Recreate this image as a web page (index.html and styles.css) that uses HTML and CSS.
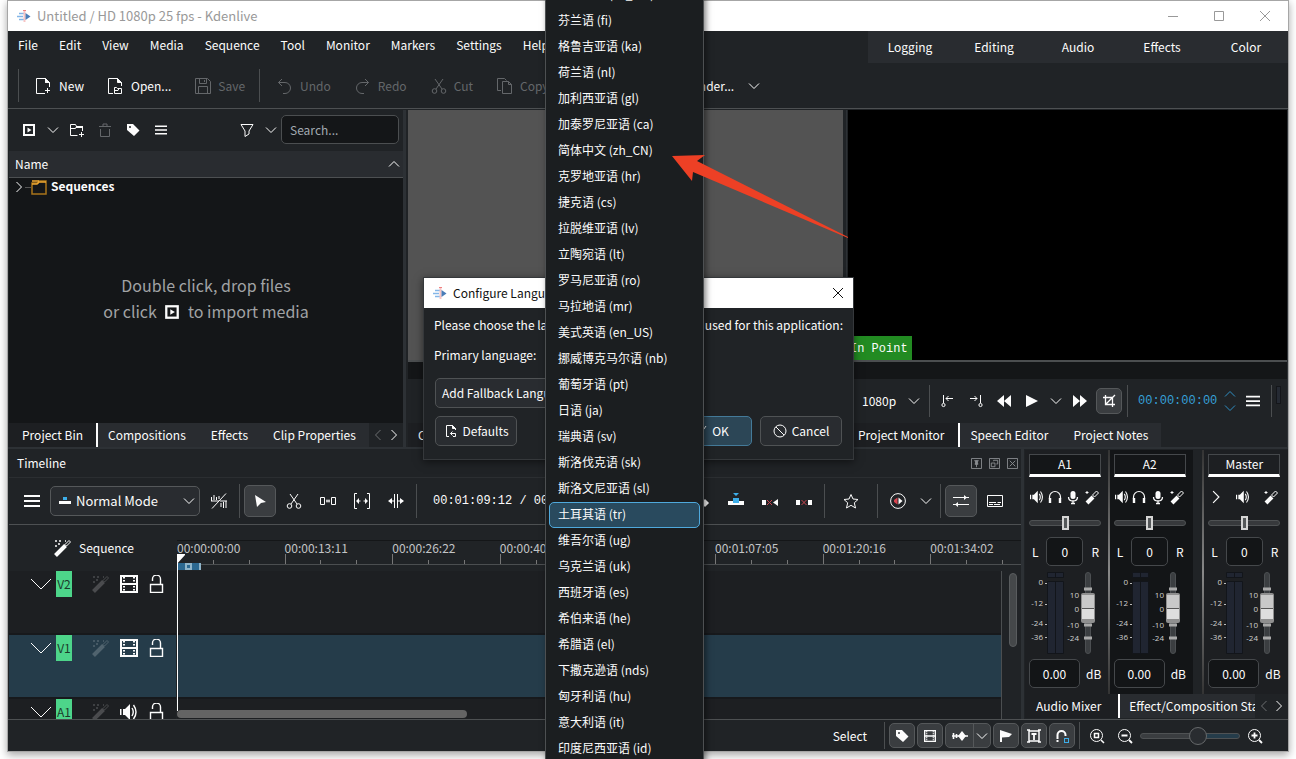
FILE: index.html
```html
<!DOCTYPE html>
<html lang="en">
<head>
<meta charset="utf-8">
<title>Untitled / HD 1080p 25 fps - Kdenlive</title>
<link rel="stylesheet" href="styles.css">
</head>
<body>
<svg class="sprite" aria-hidden="true">
  <symbol id="logo" viewBox="0 0 14 14"><path d="M2 4.500h5M0 7.500h6M2 10.500h5" stroke="#84b6e8" stroke-width="1.600"/><path d="M7.500 1v12" stroke="#f7c4c4" stroke-width="2"/><path d="M6 1.500h3" stroke="#f08080"/><path d="M8.500 4l5 3.500-5 3.500z" fill="#4a7db8"/></symbol>
  <symbol id="chev" viewBox="0 0 12 12"><path d="M1 3.500l5 5 5-5"/></symbol>
  <symbol id="chev-up" viewBox="0 0 12 12"><path d="M1 8.500l5-5 5 5"/></symbol>
  <symbol id="chev-r" viewBox="0 0 12 12"><path d="M3.500 1l5 5-5 5"/></symbol>
  <symbol id="chev-l" viewBox="0 0 12 12"><path d="M8.500 1l-5 5 5 5"/></symbol>
  <symbol id="wide" viewBox="0 0 22 12"><path d="M1 1l10 10 10-10"/></symbol>
  <symbol id="menu" viewBox="0 0 16 16"><path d="M0 3h16M0 8h16M0 13h16" stroke-width="2"/></symbol>
  <symbol id="new" viewBox="0 0 16 16"><path d="M9 15.500H.5V.5h9l4 4V9M9.500 .5v4h4M11.500 10v5M9 12.500h5"/><path d="M9.500 .5v4h4z" fill="currentColor"/></symbol>
  <symbol id="open" viewBox="0 0 16 16"><path d="M5 15.500H.5V.5h9l4 4V8M6.500 15.500v-6h2l1 1h4v5zM7 12.500h3l1-2"/><path d="M9.500 .5v4h4z" fill="currentColor"/></symbol>
  <symbol id="save" viewBox="0 0 16 16"><path d="M.5 .5h12l3 3v12H.5zM4.500 .5v5h7v-5M3.500 15.500v-7h9v7M9.500 2v2"/></symbol>
  <symbol id="undo" viewBox="0 0 16 16"><path d="M5 1L1.500 4.500 5 8M1.500 4.500H8a5.500 5.500 0 010 11H6"/></symbol>
  <symbol id="redo" viewBox="0 0 16 16"><path d="M10 1l3.500 3.500L10 8M13.500 4.500H7a5.500 5.500 0 000 11h2"/></symbol>
  <symbol id="cut" viewBox="0 0 16 16"><path d="M4 1l7 10M12 1L5 11"/><circle cx="3.500" cy="13" r="2.300"/><circle cx="12.500" cy="13" r="2.300"/></symbol>
  <symbol id="copy" viewBox="0 0 16 16"><path d="M4 12.500H.5V.5h7l2 2M5.500 3.500h6l3 3v9h-9zM11.500 3.500v3h3"/></symbol>
  <symbol id="clip" viewBox="0 0 14 14"><rect x="2" y="2" width="10" height="10" stroke-width="2"/><path d="M5.500 4.500v5l4-2.500z" fill="currentColor" stroke="none"/></symbol>
  <symbol id="addfolder" viewBox="0 0 16 16"><path d="M8.500 13.500h-7v-11h5l1 2h6V9M1.500 6.500h5l1-2M12.500 10v5M10 12.500h5"/><path d="M7 4h7v2H7z" fill="currentColor" stroke="none"/></symbol>
  <symbol id="trash" viewBox="0 0 16 16"><path d="M2 4.500h12M6 4V2h4v2M3.500 7v7.500h9V7"/></symbol>
  <symbol id="tag" viewBox="0 0 16 16"><path d="M2 2h6l6.500 6.500-5.500 5.500L2 8zM5 4a1 1 0 100 2 1 1 0 000-2z" fill="currentColor" fill-rule="evenodd" stroke="none"/></symbol>
  <symbol id="filter" viewBox="0 0 16 16"><path d="M2 2.500h12L10 9v3l-4 2.500V9z"/></symbol>
  <symbol id="folder" viewBox="0 0 16 16"><path d="M1 4h6l1-2h7v13H1z" stroke="#a8741a" stroke-width="1.500"/><path d="M1 2h7M15 3H8L6 5H1" stroke="#f0a830" stroke-width="1.500"/></symbol>
  <symbol id="wand" viewBox="0 0 18 18"><path d="M1.500 16.500l10-10" stroke-width="4"/><path d="M11 5.500l4-4 1.500 1.500-4 4z"/><path d="M1 2h2M5 2h2M11 2h1M4 5h2M1 7h2" stroke-width="1.600"/></symbol>
  <symbol id="film" viewBox="0 0 18 18"><path d="M1 1h16v16H1zM1 9h16" stroke-width="2"/><path d="M4 2v14M14 2v14" stroke-dasharray="1.500 1.500" stroke-width="2"/></symbol>
  <symbol id="lock" viewBox="0 0 16 18"><path d="M1.500 9.500h12v8h-12zM3.500 6V4a3.500 3.500 0 018 0v5" stroke-width="1.400"/></symbol>
  <symbol id="vol" viewBox="0 0 18 18"><path d="M0 6h1.500v6H0zM3 6h2l5-5v16l-5-5H3z" fill="currentColor" stroke="none"/><path d="M12 5q2.500 4 0 8M13.500 2q5 7 0 14" stroke-width="1.400"/></symbol>
  <symbol id="head" viewBox="0 0 16 16"><path d="M2.500 10V8a5.500 5.500 0 0111 0v2" stroke-width="1.200"/><path d="M3 9v5M13 9v5" stroke-width="2.400"/></symbol>
  <symbol id="mic" viewBox="0 0 16 16"><rect x="5.500" y="2" width="5" height="8" rx="2.500" fill="currentColor" stroke="none"/><path d="M3.500 8q0 4 4.500 4t4.500-4M8 12v3M6 14.500h4" stroke-width="1.300"/></symbol>
  <symbol id="fx" viewBox="0 0 16 16"><path d="M3 14l6-6" stroke-width="4"/><path d="M8.500 6l4-4 2 2-4 4zM3 2v3M1.500 3.500h3"/></symbol>
  <symbol id="nowave" viewBox="0 0 16 16"><path d="M.5 4v4M3 2v5M5.500 4v3M8 3v3M10 10v4M12.500 9v6M15 8v7M1 15.500L15 .5M0 8h8M9 8h7"/></symbol>
  <symbol id="pointer" viewBox="0 0 16 16"><path d="M3 2l11 7-5 1-4 4z" fill="currentColor" stroke="none"/></symbol>
  <symbol id="spacer" viewBox="0 0 16 16"><path d="M.5 4.500h4v7h-4zM11.500 4.500h4v7h-4zM6 8h4M7 6.500v3M9 6.500v3"/></symbol>
  <symbol id="slip" viewBox="0 0 16 16"><path d="M3 .5H.5v15H3M13 .5h2.500v15H13M3 8h3.500M9.500 8H13"/><path d="M5 5v6L2 8zM11 5v6l3-3z" fill="currentColor" stroke="none"/></symbol>
  <symbol id="ripple" viewBox="0 0 16 16"><path d="M6.500 1v14M9.500 1v14M2 8h4M10 8h4"/><path d="M4 5v6L0 8zM12 5v6l4-3z" fill="currentColor" stroke="none"/></symbol>
  <symbol id="mix" viewBox="0 0 16 16"><path d="M0 8h5v4H0z" fill="currentColor" stroke="none"/><path d="M7 10l4-4 4 4-4 4z" fill="currentColor" stroke="none"/></symbol>
  <symbol id="insert" viewBox="0 0 16 16"><path d="M0 8h16v4H0z" fill="currentColor" stroke="none"/><path d="M5 5h6v5H5zM5 0h6L8 3z" fill="#3daee9" stroke="none"/></symbol>
  <symbol id="extract" viewBox="0 0 16 16"><path d="M0 7h4v5H0zM16 6v7l-5-3.500z" fill="currentColor" stroke="none"/><path d="M5 7l5 5M10 7l-5 5" stroke="#c8454f"/></symbol>
  <symbol id="lift" viewBox="0 0 16 16"><path d="M0 7h4v5H0zM12 7h4v5h-4z" fill="currentColor" stroke="none"/><path d="M5.500 7l5 5M10.500 7l-5 5" stroke="#c8454f"/></symbol>
  <symbol id="star" viewBox="0 0 16 16"><path d="M8 1.500l2 4.500 5 .5-3.700 3.300L12.500 15 8 12.300 3.500 15l1.200-5.200L1 6.500 6 6z"/></symbol>
  <symbol id="preview" viewBox="0 0 16 16"><circle cx="8" cy="8" r="7.400"/><path d="M7.500 4.500v7L4 9V7z" fill="#d9444f" stroke="none"/><path d="M8.500 4.500v7L12.500 8z" fill="currentColor" stroke="none"/></symbol>
  <symbol id="sliders" viewBox="0 0 16 16"><path d="M0 4.500h16M0 11.500h16"/><path d="M11 2v5l3-2.500zM5 9v5l-3-2.500z" fill="currentColor" stroke="none"/></symbol>
  <symbol id="subtitle" viewBox="0 0 16 16"><path d="M.5 2.500h15v11H.5zM2 9.500h7M10.500 9.500H14M2 11.500h4M7 11.500h6"/></symbol>
  <symbol id="setin" viewBox="0 0 16 16"><path d="M3.500 2v8M6 5.500h7M8.500 3L6 5.500 8.500 8"/><circle cx="3.500" cy="12" r="1.600"/></symbol>
  <symbol id="setout" viewBox="0 0 16 16"><path d="M12.500 2v8M2 5.500h7M6.500 3L9 5.500 6.500 8"/><circle cx="12.500" cy="12" r="1.600"/></symbol>
  <symbol id="rew" viewBox="0 0 16 16"><path d="M8 2v12L1 8zM15 2v12L8 8z" fill="currentColor" stroke="none"/></symbol>
  <symbol id="fwd" viewBox="0 0 16 16"><path d="M8 2v12l7-6zM1 2v12l7-6z" fill="currentColor" stroke="none"/></symbol>
  <symbol id="play" viewBox="0 0 16 16"><path d="M2 2v12l12-6z" fill="currentColor" stroke="none"/></symbol>
  <symbol id="crop" viewBox="0 0 16 16"><path d="M4.500 2v9.500H14M2 4.500h9.500V14M5 11l9-9" stroke-width="1.300"/></symbol>
  <symbol id="wave" viewBox="0 0 16 16"><path d="M1.500 5v6M0 8h16M4.500 6v4" stroke-width="1.600"/><path d="M6 8l4-5 4 5-4 5z" fill="currentColor" stroke="none"/></symbol>
  <symbol id="flag" viewBox="0 0 16 16"><path d="M2 2l12 4-3 3-7 .5V14H2z" fill="currentColor" stroke="none"/></symbol>
  <symbol id="textbox" viewBox="0 0 16 16"><path d="M3 3h10v10H3zM1 2h3M12 2h3M1 14h3M12 14h3" stroke-width="1.500"/><path d="M5.500 6h5M8 6v6" stroke-width="1.800"/></symbol>
  <symbol id="magnet" viewBox="0 0 16 16"><path d="M3.500 11V7a4 4 0 018 0v1" stroke-width="2"/><path d="M3.500 12v2" stroke-width="2"/><rect x="10.500" y="10.500" width="4" height="4" stroke="#3daee9"/></symbol>
  <symbol id="zfit" viewBox="0 0 16 16"><circle cx="7.500" cy="7.500" r="6"/><path d="M5.500 5.500h4v4h-4zM12 12l3 3" stroke-width="1.500"/></symbol>
  <symbol id="zout" viewBox="0 0 16 16"><circle cx="7.500" cy="7.500" r="6"/><path d="M4.500 7.500h6M12 12l3 3" stroke-width="1.800"/></symbol>
  <symbol id="zin" viewBox="0 0 16 16"><circle cx="7.500" cy="7.500" r="6"/><path d="M4.500 7.500h6M7.500 4.500v6M12 12l3 3" stroke-width="1.800"/></symbol>
  <symbol id="x" viewBox="0 0 12 12"><path d="M1 1l10 10M11 1L1 11"/></symbol>
  <symbol id="min" viewBox="0 0 12 12"><path d="M1 6.500h10"/></symbol>
  <symbol id="max" viewBox="0 0 12 12"><path d="M1.500 1.500h9v9h-9z"/></symbol>
  <symbol id="pin" viewBox="0 0 12 12"><path d="M.5 .5h11v11H.5zM3.500 3h5M6 7v3M4 6.500h4"/><path d="M5 3h2v4H5z" fill="currentColor"/></symbol>
  <symbol id="float" viewBox="0 0 12 12"><path d="M.5 .5h11v11H.5zM2.500 5.500h4v4h-4zM5 3.500V2.500h4.500v4H8"/></symbol>
  <symbol id="boxx" viewBox="0 0 12 12"><path d="M.5 .5h11v11H.5zM3 3l6 6M9 3L3 9"/></symbol>
  <symbol id="deny" viewBox="0 0 14 14"><circle cx="7" cy="7" r="6"/><path d="M3 3l8 8"/></symbol>
  <symbol id="reset" viewBox="0 0 14 14"><path d="M5 12.500H2.500v-11h6l3 3V6M11.500 12.500V9.500h-5M8.500 7.500l-2 2 2 2M9 12.500h2.500"/><path d="M8.500 1.500v3h3z" fill="currentColor"/></symbol>
  <symbol id="check" viewBox="0 0 14 14"><path d="M2 8l4 4 7-10"/></symbol>
  <symbol id="mode" viewBox="0 0 12 12"><path d="M0 6h12v3H0z" fill="currentColor" stroke="none"/><path d="M4 2h4v3H4z" fill="#3daee9" stroke="none"/></symbol>
  <symbol id="meter" viewBox="0 0 74 82">
    <g fill="#202531" stroke="#12151a"><path d="M19.500 .5h8v5h-8zM27.500 .5h8v5h-8zM19.500 9.500h8v72h-8zM27.500 9.500h8v72h-8z"/></g>
    <path d="M17 11.500h2M17 32.500h2M17 52.500h2M17 65.500h2" stroke="#bbb"/>
    <rect x="57.500" y=".5" width="5" height="81" rx="2.500" fill="#3b3e41" stroke="#4c4f52"/>
    <path d="M56 17h8M56 53h8M56 66h8" stroke="#a9a9a9" stroke-width="3"/>
    <rect x="53" y="21" width="14" height="30" rx="2" fill="#8f8f8f" stroke="none"/><path d="M54 23h12v13H54z" fill="#c8c8c8" stroke="none"/><path d="M54 37h12v10H54z" fill="#dedede" stroke="none"/><path d="M54 36.500h12" stroke="#555"/>
  </symbol>
</svg>

<main class="window">
  <header class="titlebar">
    <svg class="logo"><use href="#logo"/></svg>
    <h1>Untitled / HD 1080p 25 fps - Kdenlive</h1>
    <div class="winctl">
      <button aria-label="Minimize"><svg class="i12"><use href="#min"/></svg></button>
      <button aria-label="Maximize"><svg class="i12"><use href="#max"/></svg></button>
      <button aria-label="Close"><svg class="i12"><use href="#x"/></svg></button>
    </div>
  </header>

  <div class="menurow">
    <nav class="menubar">
      <button>File</button><button>Edit</button><button>View</button><button>Media</button><button>Sequence</button><button>Tool</button><button>Monitor</button><button>Markers</button><button>Settings</button><button>Help</button>
    </nav>
    <nav class="workspaces">
      <button>Logging</button><button>Editing</button><button>Audio</button><button>Effects</button><button>Color</button>
    </nav>
  </div>

  <div class="toolbar">
    <span class="sep"></span>
    <button><svg class="i16"><use href="#new"/></svg>New</button>
    <button><svg class="i16"><use href="#open"/></svg>Open...</button>
    <button disabled><svg class="i16"><use href="#save"/></svg>Save</button>
    <span class="sep"></span>
    <button disabled><svg class="i16"><use href="#undo"/></svg>Undo</button>
    <button disabled><svg class="i16"><use href="#redo"/></svg>Redo</button>
    <button disabled><svg class="i16"><use href="#cut"/></svg>Cut</button>
    <button disabled><svg class="i16"><use href="#copy"/></svg>Copy</button>
    <button disabled><svg class="i16"><use href="#copy"/></svg>Paste</button>
    <button class="render">Render...<svg class="i12"><use href="#chev"/></svg></button>
  </div>

  <div class="docks">
    <section class="bin">
      <div class="bintools">
        <button class="w28" aria-label="Add clip"><svg class="i14"><use href="#clip"/></svg></button>
        <button class="w20" aria-label="Add clip menu"><svg class="i12"><use href="#chev"/></svg></button>
        <button class="w28" aria-label="Create folder"><svg class="i16"><use href="#addfolder"/></svg></button>
        <button class="w28" disabled aria-label="Delete"><svg class="i16"><use href="#trash"/></svg></button>
        <button class="w28" aria-label="Tags"><svg class="i16"><use href="#tag"/></svg></button>
        <button class="w28" aria-label="Options"><svg class="i12"><use href="#menu"/></svg></button>
        <button class="w24 right" aria-label="Filter"><svg class="i16"><use href="#filter"/></svg></button>
        <button class="w24" aria-label="Filter menu"><svg class="i12"><use href="#chev"/></svg></button>
        <input type="text" class="search" placeholder="Search..." aria-label="Search">
      </div>
      <div class="binhead"><span>Name</span><svg class="i12"><use href="#chev-up"/></svg></div>
      <div class="tree">
        <div class="treerow"><svg class="i12"><use href="#chev-r"/></svg><span class="branch"></span><svg class="i16"><use href="#folder"/></svg><b>Sequences</b></div>
        <p class="hint">Double click, drop files<br>or click <svg class="i16"><use href="#clip"/></svg> to import media</p>
      </div>
      <nav class="tabs">
        <button class="on">Project Bin</button><button>Compositions</button><button>Effects</button><button>Clip Properties</button>
        <span class="tabnav"><svg class="i12 dim"><use href="#chev-l"/></svg><svg class="i12"><use href="#chev-r"/></svg></span>
      </nav>
    </section>

    <section class="monitor">
      <div class="screen grey"></div>
      <div class="mruler"></div>
      <div class="mtools"></div>
      <nav class="tabs"><button class="on">Clip Monitor</button><button>Library</button></nav>
    </section>

    <section class="monitor">
      <div class="screen black"><span class="inpoint">In Point</span></div>
      <div class="mruler"></div>
      <div class="mtools">
        <button class="res">1080p<svg class="i12"><use href="#chev"/></svg></button>
        <span class="sep"></span>
        <button class="w28" aria-label="Set zone in"><svg class="i16"><use href="#setin"/></svg></button>
        <button class="w28" aria-label="Set zone out"><svg class="i16"><use href="#setout"/></svg></button>
        <button class="w28" aria-label="Rewind"><svg class="i16"><use href="#rew"/></svg></button>
        <button class="w28" aria-label="Play"><svg class="i16"><use href="#play"/></svg></button>
        <button class="w20" aria-label="Play menu"><svg class="i12"><use href="#chev"/></svg></button>
        <button class="w28" aria-label="Forward"><svg class="i16"><use href="#fwd"/></svg></button>
        <button class="w26 active" aria-label="Edit mode"><svg class="i16"><use href="#crop"/></svg></button>
        <span class="sep"></span>
        <span class="tc">00:00:00:00</span>
        <span class="spin"><svg class="i12"><use href="#chev-up"/></svg><svg class="i12"><use href="#chev"/></svg></span>
        <button class="w20" aria-label="Monitor options"><svg class="i14"><use href="#menu"/></svg></button>
        <span class="sep"></span>
        <span class="mini"></span>
      </div>
      <nav class="tabs"><button class="on">Project Monitor</button><button>Speech Editor</button><button>Project Notes</button></nav>
    </section>
  </div>

  <div class="lower">
    <section class="timeline">
      <div class="docktitle"><h2>Timeline</h2><svg class="i11"><use href="#pin"/></svg><svg class="i11"><use href="#float"/></svg><svg class="i11"><use href="#boxx"/></svg></div>
      <div class="ttools">
        <button class="w28" aria-label="Timeline menu"><svg class="i16"><use href="#menu"/></svg></button>
        <label class="mode"><svg class="i12"><use href="#mode"/></svg><select aria-label="Edit mode"><option>Normal Mode</option></select><svg class="i12"><use href="#chev"/></svg></label>
        <button class="w32" aria-label="Waveforms"><svg class="i16"><use href="#nowave"/></svg></button>
        <span class="sep"></span>
        <button class="w32 active" aria-label="Selection tool"><svg class="i16"><use href="#pointer"/></svg></button>
        <button class="w32" aria-label="Razor tool"><svg class="i16"><use href="#cut"/></svg></button>
        <button class="w32" aria-label="Spacer tool"><svg class="i16"><use href="#spacer"/></svg></button>
        <button class="w32" aria-label="Slip tool"><svg class="i16"><use href="#slip"/></svg></button>
        <button class="w32" aria-label="Ripple tool"><svg class="i16"><use href="#ripple"/></svg></button>
        <span class="sep"></span>
        <span class="pos">00:01:09:12 / 00:00:00:00</span>
        <button class="w32 right" aria-label="Mix clips"><svg class="i16"><use href="#mix"/></svg></button>
        <button class="w32" aria-label="Insert zone"><svg class="i16"><use href="#insert"/></svg></button>
        <button class="w32" aria-label="Extract zone"><svg class="i16"><use href="#extract"/></svg></button>
        <button class="w32" aria-label="Lift zone"><svg class="i16"><use href="#lift"/></svg></button>
        <span class="sep"></span>
        <button class="w32 wide" aria-label="Favorite effects"><svg class="i16"><use href="#star"/></svg></button>
        <span class="sep"></span>
        <button class="w32" aria-label="Render preview"><svg class="i16"><use href="#preview"/></svg></button>
        <button class="w20" aria-label="Preview menu"><svg class="i12"><use href="#chev"/></svg></button>
        <span class="sep"></span>
        <button class="w32 active" aria-label="Show mixer"><svg class="i16"><use href="#sliders"/></svg></button>
        <button class="w32" aria-label="Subtitles"><svg class="i16"><use href="#subtitle"/></svg></button>
      </div>
      <div class="rulerrow">
        <div class="seqhead"><svg class="i18"><use href="#wand"/></svg>Sequence</div>
        <div class="ruler">
          <div class="cell">00:00:00:00<span class="ticks"><i></i><i></i><i></i></span></div>
          <div class="cell">00:00:13:11<span class="ticks"><i></i><i></i><i></i></span></div>
          <div class="cell">00:00:26:22<span class="ticks"><i></i><i></i><i></i></span></div>
          <div class="cell">00:00:40:08<span class="ticks"><i></i><i></i><i></i></span></div>
          <div class="cell">00:00:53:19<span class="ticks"><i></i><i></i><i></i></span></div>
          <div class="cell">00:01:07:05<span class="ticks"><i></i><i></i><i></i></span></div>
          <div class="cell">00:01:20:16<span class="ticks"><i></i><i></i><i></i></span></div>
          <div class="cell">00:01:34:02<span class="ticks"><i></i><i></i><i></i></span></div>
          <span class="zone"></span>
        </div>
      </div>
      <div class="tracks">
        <div class="heads">
          <div class="head"><svg class="fold"><use href="#wide"/></svg><span class="tname">V2</span><svg class="i18 faint"><use href="#wand"/></svg><svg class="i18"><use href="#film"/></svg><svg class="i18"><use href="#lock"/></svg></div>
          <div class="head sel"><svg class="fold"><use href="#wide"/></svg><span class="tname">V1</span><svg class="i18 faint"><use href="#wand"/></svg><svg class="i18"><use href="#film"/></svg><svg class="i18"><use href="#lock"/></svg></div>
          <div class="head"><svg class="fold"><use href="#wide"/></svg><span class="tname">A1</span><svg class="i18 faint"><use href="#wand"/></svg><svg class="i18"><use href="#vol"/></svg><svg class="i18"><use href="#lock"/></svg></div>
        </div>
        <div class="lanes"><div class="lane"></div><div class="lane sel"></div><div class="lane"></div><span class="hbar"></span></div>
        <div class="vscroll"><span></span></div>
        <svg class="playhead" viewBox="0 0 8 160" preserveAspectRatio="none"><path d="M0 0h8v1L1 9v151H0z" fill="#fff" stroke="none"/></svg>
      </div>
    </section>

    <section class="mixer">
      <div class="strips">
        <div class="strip">
          <h3>A1</h3>
          <div class="sicons"><svg class="i14"><use href="#vol"/></svg><svg class="i16"><use href="#head"/></svg><svg class="i16"><use href="#mic"/></svg><svg class="i16"><use href="#fx"/></svg></div>
          <input type="range" class="pan" aria-label="A1 balance">
          <div class="lr"><span>L</span><input type="text" value="0" aria-label="A1 balance value"><span>R</span></div>
          <svg class="meter" viewBox="0 0 74 82"><use href="#meter"/><g class="scale"><text x="15" y="13">0</text><text x="15" y="34">-12</text><text x="15" y="54">-24</text><text x="15" y="68">-36</text><text x="51" y="26">10</text><text x="51" y="40">0</text><text x="51" y="56">-10</text><text x="51" y="69">-24</text></g></svg>
          <div class="db"><input type="text" value="0.00" aria-label="A1 volume"><span>dB</span></div>
        </div>
        <div class="strip alt">
          <h3>A2</h3>
          <div class="sicons"><svg class="i14"><use href="#vol"/></svg><svg class="i16"><use href="#head"/></svg><svg class="i16"><use href="#mic"/></svg><svg class="i16"><use href="#fx"/></svg></div>
          <input type="range" class="pan" aria-label="A2 balance">
          <div class="lr"><span>L</span><input type="text" value="0" aria-label="A2 balance value"><span>R</span></div>
          <svg class="meter" viewBox="0 0 74 82"><use href="#meter"/><g class="scale"><text x="15" y="13">0</text><text x="15" y="34">-12</text><text x="15" y="54">-24</text><text x="15" y="68">-36</text><text x="51" y="26">10</text><text x="51" y="40">0</text><text x="51" y="56">-10</text><text x="51" y="69">-24</text></g></svg>
          <div class="db"><input type="text" value="0.00" aria-label="A2 volume"><span>dB</span></div>
        </div>
        <div class="strip master">
          <h3>Master</h3>
          <div class="sicons"><svg class="i14"><use href="#chev-r"/></svg><svg class="i14"><use href="#vol"/></svg><svg class="i16"><use href="#fx"/></svg></div>
          <input type="range" class="pan" aria-label="Master balance">
          <div class="lr"><span>L</span><input type="text" value="0" aria-label="Master balance value"><span>R</span></div>
          <svg class="meter" viewBox="0 0 74 82"><use href="#meter"/><g class="scale"><text x="15" y="13">0</text><text x="15" y="34">-12</text><text x="15" y="54">-24</text><text x="15" y="68">-36</text><text x="51" y="26">10</text><text x="51" y="40">0</text><text x="51" y="56">-10</text><text x="51" y="69">-24</text></g></svg>
          <div class="db"><input type="text" value="0.00" aria-label="Master volume"><span>dB</span></div>
        </div>
      </div>
      <nav class="tabs"><button class="on">Audio Mixer</button><button class="clip">Effect/Composition Stack</button>
        <span class="tabnav"><svg class="i12 dim"><use href="#chev-l"/></svg><svg class="i12"><use href="#chev-r"/></svg></span></nav>
    </section>
  </div>

  <footer class="status">
    <span class="msg">Select</span>
    <span class="sep"></span>
    <button class="sb" aria-label="Color tags"><svg class="i16"><use href="#tag"/></svg></button>
    <button class="sb" aria-label="Video thumbnails"><svg class="i12"><use href="#film"/></svg></button>
    <div class="split"><button aria-label="Audio thumbnails"><svg class="i16"><use href="#wave"/></svg></button><button aria-label="Audio thumbnails menu"><svg class="i12"><use href="#chev"/></svg></button></div>
    <button class="sb" aria-label="Markers"><svg class="i16"><use href="#flag"/></svg></button>
    <button class="sb" aria-label="Marker comments"><svg class="i16"><use href="#textbox"/></svg></button>
    <button class="sb" aria-label="Snap"><svg class="i16"><use href="#magnet"/></svg></button>
    <span class="sep"></span>
    <button class="w26" aria-label="Fit zoom"><svg class="i16"><use href="#zfit"/></svg></button>
    <button class="w26" aria-label="Zoom out"><svg class="i16"><use href="#zout"/></svg></button>
    <input type="range" class="zoom" value="60" aria-label="Zoom">
    <button class="w26" aria-label="Zoom in"><svg class="i16"><use href="#zin"/></svg></button>
  </footer>
</main>

<div class="dialog" role="dialog" aria-labelledby="dlg-title">
  <header><svg class="logo"><use href="#logo"/></svg><h2 id="dlg-title">Configure Language</h2><button aria-label="Close dialog"><svg class="i12"><use href="#x"/></svg></button></header>
  <div class="dbody">
    <p class="intro"><span>Please choose the language which</span> <span>should be used for this application:</span></p>
    <p>Primary language:</p>
    <button class="btn fallback">Add Fallback Language</button>
    <div class="dbtns">
      <button class="btn"><svg class="i14"><use href="#reset"/></svg>Defaults</button>
      <button class="btn ok"><svg class="i14"><use href="#check"/></svg>OK</button>
      <button class="btn"><svg class="i14"><use href="#deny"/></svg>Cancel</button>
    </div>
  </div>
</div>

<ul class="popup" role="listbox" aria-label="Primary language" lang="zh-CN">
  <li role="option">繁体中文 (zh_TW)</li>
  <li role="option">芬兰语 (fi)</li>
  <li role="option">格鲁吉亚语 (ka)</li>
  <li role="option">荷兰语 (nl)</li>
  <li role="option">加利西亚语 (gl)</li>
  <li role="option">加泰罗尼亚语 (ca)</li>
  <li role="option">简体中文 (zh_CN)</li>
  <li role="option">克罗地亚语 (hr)</li>
  <li role="option">捷克语 (cs)</li>
  <li role="option">拉脱维亚语 (lv)</li>
  <li role="option">立陶宛语 (lt)</li>
  <li role="option">罗马尼亚语 (ro)</li>
  <li role="option">马拉地语 (mr)</li>
  <li role="option">美式英语 (en_US)</li>
  <li role="option">挪威博克马尔语 (nb)</li>
  <li role="option">葡萄牙语 (pt)</li>
  <li role="option">日语 (ja)</li>
  <li role="option">瑞典语 (sv)</li>
  <li role="option">斯洛伐克语 (sk)</li>
  <li role="option">斯洛文尼亚语 (sl)</li>
  <li role="option" aria-selected="true">土耳其语 (tr)</li>
  <li role="option">维吾尔语 (ug)</li>
  <li role="option">乌克兰语 (uk)</li>
  <li role="option">西班牙语 (es)</li>
  <li role="option">希伯来语 (he)</li>
  <li role="option">希腊语 (el)</li>
  <li role="option">下撒克逊语 (nds)</li>
  <li role="option">匈牙利语 (hu)</li>
  <li role="option">意大利语 (it)</li>
  <li role="option">印度尼西亚语 (id)</li>
</ul>

<svg class="arrow" viewBox="0 0 178 86" aria-hidden="true"><path d="M1 2l33-1-8 6 151 76v1L22 18l-1 9z" fill="#ed4025" stroke="none"/></svg>
</body>
</html>
```
FILE: styles.css
```css
* { box-sizing: border-box; }
html { height: 100%; }
body {
  margin: 0;
  height: 100vh;
  padding: 0 7px 7px;
  display: flex;
  position: relative;
  overflow: hidden;
  background: #fff;
  color: #fcfcfc;
  font: 12px/18px "Noto Sans CJK SC", "Noto Sans", sans-serif;
}
h1, h2, h3, p, ul { margin: 0; padding: 0; font-size: inherit; font-weight: 400; }
button, input, select { font: inherit; color: inherit; }
button {
  border: 0;
  padding: 0;
  background: none;
  display: inline-flex;
  align-items: center;
  justify-content: center;
  white-space: nowrap;
}
svg { fill: none; stroke: currentColor; flex: none; }
.sprite { position: absolute; width: 0; height: 0; }
.i11 { width: 11px; height: 11px; }
.i12 { width: 12px; height: 12px; }
.i14 { width: 14px; height: 14px; }
.i16 { width: 16px; height: 16px; }
.i18 { width: 18px; height: 18px; }
.w20 { width: 20px; }
.w24 { width: 24px; }
.w26 { width: 26px; }
.w28 { width: 28px; }
.w32 { width: 32px; height: 32px; }
.right { margin-left: auto; }
.dim { opacity: .35; }
.faint { opacity: .2; }
button:disabled { color: #64676a; }
.active { background: #3a3d40; border: 1px solid #55585a; border-radius: 5px; }
.sep { width: 1px; background: #4b4e50; flex: none; }
.logo { width: 14px; height: 14px; stroke: none; }

.window {
  flex: 1;
  min-width: 0;
  display: flex;
  flex-direction: column;
  border: 1px solid #a6a6a6;
  background: #202326;
  box-shadow: 0 3px 8px rgba(0, 0, 0, .35);
}
.titlebar { height: 30px; display: flex; align-items: center; gap: 6px; padding-left: 9px; background: #fff; color: #999; font-size: 13px; }
.winctl { margin-left: auto; display: flex; }
.winctl button { width: 46px; height: 30px; }

.menurow { display: flex; height: 32px; }
.menubar { display: flex; gap: 1px; height: 27px; }
.menubar button { padding: 0 10px; }
.workspaces { margin-left: auto; display: flex; background: #292c30; }
.workspaces button { width: 84px; }

.toolbar { display: flex; align-items: stretch; height: 46px; padding: 6px 8px; border-bottom: 1px solid #4d5052; }
.toolbar .sep { margin: 0 5px 0 2px; }
.toolbar button { padding: 0 12px; gap: 7px; }
.toolbar .render { margin-left: 35px; gap: 14px; }

.docks { flex: 1; min-height: 0; display: grid; grid-template-columns: 399fr 440fr 441fr; padding-top: 1px; border-bottom: 2px solid #2d3135; }
.docks section { display: flex; flex-direction: column; min-width: 0; min-height: 0; }
.bin { border-right: 3px solid #2d3135; margin-right: 1px; padding-left: 1px; }
.bintools { display: flex; align-items: center; height: 41px; padding: 0 4px 2px 6px; }
.search { width: 118px; height: 29px; padding: 0 8px; margin-left: -2px; border: 1px solid #4b4e50; border-radius: 5px; background: #141618; }
.search::placeholder { color: #a1a9b1; opacity: 1; }
.binhead { display: flex; justify-content: space-between; align-items: center; height: 27px; padding: 0 3px 0 6px; background: #292c30; border-bottom: 1px solid #4d5052; }
.tree { flex: 1; background: #141618; }
.treerow { display: flex; align-items: center; height: 18px; padding-left: 4px; line-height: 16px; }
.treerow b { margin-left: 4px; padding-bottom: 2px; }
.branch { width: 6px; height: 1px; background: #555; }
.hint { padding-top: 76px; text-align: center; font-size: 16px; line-height: 26px; color: #a1a3a5; }
.hint svg { vertical-align: -2px; margin: 0 4px; color: #fcfcfc; }
.tabs { display: flex; height: 24px; }
.tabs button { padding: 0 13px 0 12px; background: #292c30; }
.tabs .on { padding: 0 13px; background: #1d1f22; border-right: 2px solid #fcfcfc; }
.tabs .on + button { padding-left: 10px; }
.tabnav { display: flex; flex: 1; align-items: center; justify-content: space-evenly; }

.monitor { border-right: 1px solid #2d3135; padding-left: 1px; }
.monitor .tabs .on { padding: 0 14px 0 10px; }
.screen { flex: 1; display: flex; align-items: flex-end; border-bottom: 2px solid #4b4e50; }
.grey { background: #535353; margin-right: 3px; }
.black { background: #000; }
.inpoint { padding: 4px 4px 2px 2px; background: #228b22; font-family: "Liberation Mono", monospace; line-height: 18px; }
.mruler { height: 17px; background: #141618; }
.mtools { display: flex; align-items: center; height: 44px; padding-left: 14px; }
.mtools .sep { height: 32px; margin: 0 4px 0 5px; }
.mtools .active { height: 26px; margin-left: 2px; }
.res { gap: 12px; padding-right: 4px; }
.tc, .pos { font-family: "Liberation Mono", monospace; }
.tc { color: #36a0d8; margin-left: 6px; }
.spin { display: flex; flex-direction: column; gap: 2px; margin: 0 7px; color: #2f8fc4; }
.mtools .spin + button { margin-right: 3px; }
.mini { width: 5px; height: 18px; margin-bottom: 12px; border: 1px solid #14161a; background: #252a33; }

.lower { display: grid; grid-template-columns: minmax(0, 1fr) 264px; }
.timeline { display: flex; flex-direction: column; min-height: 0; border-right: 3px solid #2d3135; padding-left: 1px; }
.docktitle { display: flex; align-items: center; gap: 7px; height: 29px; padding: 0 3px 0 8px; border-bottom: 1px solid #2b2e31; color: #8a8d90; }
.docktitle h2 { flex: 1; color: #fcfcfc; }
.ttools { display: flex; align-items: center; gap: 2px; height: 47px; padding: 0 10px 0 9px; border-bottom: 1px solid #4d5052; }
.ttools .sep { height: 34px; margin: 0 2px; }
.ttools .wide { margin: 0 6px; }
.mode { position: relative; display: flex; align-items: center; width: 150px; margin: 0 1px 0 2px; }
.mode select { width: 100%; height: 30px; padding: 0 25px; appearance: none; border: 1px solid #55585a; border-radius: 5px; background: #292c30; font-size: 13px; }
.mode svg { position: absolute; left: 9px; pointer-events: none; }
.mode svg:last-child { left: auto; right: 5px; }
.pos { margin-left: 12px; width: 190px; overflow: hidden; white-space: nowrap; }
.rulerrow { display: grid; grid-template-columns: 168px minmax(0, 1fr); height: 46px; }
.seqhead { display: flex; align-items: center; gap: 7px; padding-left: 45px; }
.ruler { position: relative; display: grid; grid-template-columns: repeat(8, 12.75%); margin-top: 15px; border-top: 1px solid #141618; overflow: hidden; color: #c3c5c6; }
.cell { display: flex; flex-direction: column; height: 24px; line-height: 13px; border-bottom: 1px solid #4b4e50; }
.ticks { display: grid; grid-template-columns: 1fr 1fr 1fr; align-items: end; flex: 1; }
.ticks i { height: 4px; border-left: 1px solid #777; }
.ticks i:first-child { height: 10px; }
.zone { position: absolute; left: 0; top: 22px; width: 24px; height: 7px; border-right: 2px solid #8fb4c9; background: linear-gradient(#2c6890, #2c6890) 10px 2px / 3px 3px no-repeat, linear-gradient(#8fb4c9, #8fb4c9) 8px 0 / 7px 7px no-repeat, #2c6890; }
.tracks { position: relative; flex: 1 1 0; min-height: 0; display: grid; grid-template-columns: 168px minmax(0, 1fr) 19px; }
.heads, .lanes { height: 100%; overflow: hidden; min-height: 0; }
.lanes { position: relative; border-right: 1px solid #4b4e50; }
.head, .lane { height: 64px; background: #1d1f22; border-bottom: 2px solid #17191c; }
.head { display: flex; align-items: flex-start; padding: 0 0 0 21px; margin-right: 1px; }
.head.sel, .lane.sel { background: #253c4a; }
.head svg { margin: 4px 10px 0 0; }
.head .fold { width: 22px; height: 12px; margin: 7px 4px 0 0; stroke-width: 1; }
.tname { width: 19px; height: 26px; margin-right: 20px; background: #4dd58a; color: #1c3b2c; line-height: 26px; text-align: center; }
.hbar { position: absolute; left: 0; bottom: 1px; width: 290px; height: 8px; border-radius: 4px; background: #646464; }
.vscroll { padding: 2px 0 0 7px; }
.vscroll span { display: block; width: 8px; height: 74px; border-radius: 4px; background: #45484a; border: 1px solid #595c5e; }
.playhead { position: absolute; left: 168px; top: -17px; width: 8px; height: 157px; }

.mixer { padding: 1px 0 1px 1px; min-width: 0; }
.strips { display: flex; }
.strip { width: 84px; height: 244px; padding: 4px 4px 0; background: #1d1f22; display: flex; flex-direction: column; }
.strip:first-child { width: 83px; }
.alt, .master { border-left: 2px solid; border-image: linear-gradient(#333, #888 50%, #333) 1; }
.alt { background: #131517; width: 86px; }
.master { margin-left: 9px; width: 86px; }
.strip h3 { width: 72px; height: 23px; border: 1px solid #45484b; border-bottom: 3px solid #fff; background: #141618; text-align: center; line-height: 18px; }
.master h3 { background: none; }
.sicons { display: flex; align-items: center; justify-content: space-between; width: 71px; height: 38px; padding: 2px 0 0 1px; }
.pan, .zoom { appearance: none; margin: 0; background: none; }
.pan { width: 72px; height: 16px; }
.pan::-webkit-slider-runnable-track { height: 6px; border: 1px solid #4f5254; border-radius: 3px; background: #37393c; }
.pan::-webkit-slider-thumb { appearance: none; width: 7px; height: 14px; margin-top: -5px; background: #55585a; border: 2px solid #d5d5d5; }
.lr, .db { display: flex; align-items: center; width: 72px; }
.lr { justify-content: space-between; height: 29px; margin-top: 6px; padding: 0 2px 0 3px; }
.lr input, .db input { height: 29px; padding: 0; border: 1px solid #45484b; border-radius: 5px; background: #131517; text-align: center; }
.lr input { width: 37px; }
.meter { width: 74px; height: 82px; margin-top: 6px; margin-left: -1px; }
.scale { font: 8px "Open Sans", sans-serif; fill: #d0d0d0; stroke: none; text-anchor: end; }
.db { margin-top: 5px; gap: 6px; }
.db input { width: 51px; }
.mixer .tabs .on { padding: 0 17px 0 11px; }
.mixer .tabs .clip { flex: 0 0 135px; padding: 0 0 0 9px; justify-content: flex-start; overflow: hidden; }

.status { display: flex; align-items: center; justify-content: flex-end; gap: 2px; height: 32px; padding-right: 20px; border-top: 1px solid #4d5052; }
.status .sep { height: 27px; margin: 0 2px; }
.msg { margin-right: 13px; }
.sb, .split { width: 26px; height: 25px; background: #3a3d40; border: 1px solid #55585a; border-radius: 5px; }
.split { display: flex; width: 46px; }
.split button { width: 27px; }
.split button + button { width: 17px; border-left: 1px solid #55585a; }
.zoom { width: 100px; height: 20px; }
.zoom::-webkit-slider-runnable-track { height: 6px; border: 1px solid #4f5254; border-radius: 3px; background: linear-gradient(90deg, #3a3d40 58%, #253c4a 58%); }
.zoom::-webkit-slider-thumb { appearance: none; width: 18px; height: 18px; margin-top: -7px; border: 1px solid #66696b; border-radius: 50%; background: #292c30; }

.dialog { position: absolute; left: 423px; top: 277px; width: 431px; border: 1px solid #35383b; background: #202326; box-shadow: 0 2px 8px rgba(0, 0, 0, .5); }
.dialog header { display: flex; align-items: center; gap: 6px; height: 30px; padding: 0 9px; background: #fff; color: #111; }
.dialog header h2 { flex: 1; }
.dbody { display: flex; flex-direction: column; align-items: flex-start; padding: 8px 10px 13px; white-space: nowrap; }
.dbody p { margin-bottom: 12px; }
.dbody .intro { display: flex; justify-content: space-between; align-self: stretch; }
.btn { height: 30px; min-width: 82px; gap: 5px; padding: 0 7px; border: 1px solid #4f5254; border-radius: 5px; background: #292c30; }
.fallback { margin: 2px 0 8px 1px; padding: 0 6px; }
.dbtns { display: flex; gap: 8px; align-self: stretch; padding: 0 1px; }
.ok { margin-left: auto; background: #2c4656; border-color: #447a99; }

.popup { position: absolute; left: 545px; top: -19px; width: 159px; padding: 0 3px; list-style: none; background: #1b1e20; border: 1px solid #4d5052; box-shadow: 2px 2px 6px rgba(0, 0, 0, .5); }
.popup li { height: 26px; padding: 0 8px; border: 1px solid transparent; border-radius: 5px; line-height: 22px; white-space: nowrap; }
.popup li[aria-selected] { background: #294a5e; border-color: #4fa9dc; }
.arrow { position: absolute; left: 671px; top: 154px; width: 178px; height: 86px; }
```
